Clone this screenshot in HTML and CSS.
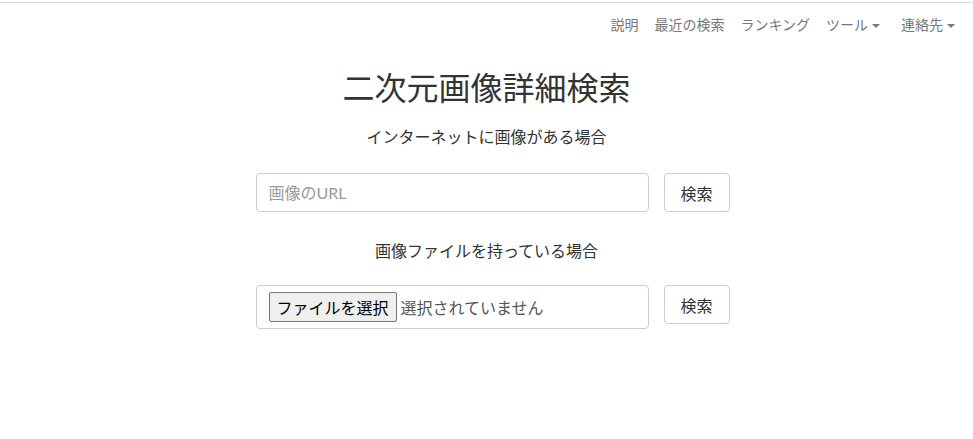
FILE: index.html
```html
<!DOCTYPE html>
<html lang="ja">
<head>
<meta charset="utf-8">
<title>二次元画像詳細検索</title>
<link rel="stylesheet" href="styles.css">
</head>
<body>
<div class="rule"></div>
<nav class="navbar">
  <ul class="nav">
    <li><a href="#">説明</a></li>
    <li><a href="#">最近の検索</a></li>
    <li><a href="#">ランキング</a></li>
    <li><a href="#" class="dropdown">ツール<span class="caret"></span></a></li>
    <li><a href="#" class="dropdown">連絡先<span class="caret"></span></a></li>
  </ul>
</nav>
<main class="main">
  <h1 class="title">二次元画像詳細検索</h1>
  <p class="lead">インターネットに画像がある場合</p>
  <form class="form-row">
    <input class="text-input" type="text" placeholder="画像のURL">
    <button class="btn" type="button">検索</button>
  </form>
  <p class="lead lead-2">画像ファイルを持っている場合</p>
  <form class="form-row form-row-2">
    <div class="file-box">
      <span class="file-btn">ファイルを選択</span>
      <span class="file-status">選択されていません</span>
    </div>
    <button class="btn" type="button">検索</button>
  </form>
</main>
</body>
</html>
```
FILE: styles.css
```css
html, body {
  margin: 0;
  padding: 0;
  background: #fff;
}
body {
  font-family: "Noto Sans CJK JP", "Lato", sans-serif;
  color: #333;
  font-size: 14px;
}
.rule {
  height: 2px;
  border-bottom: 1px solid #dddddd;
}
.navbar {
  display: flex;
  justify-content: flex-end;
  padding: 11px 5px 11px 0;
}
.nav {
  list-style: none;
  margin: 0;
  padding: 0;
  display: flex;
}
.nav a {
  display: block;
  padding: 0 8px;
  line-height: 20px;
  font-size: 14px;
  color: #777;
  text-decoration: none;
}
.caret {
  display: inline-block;
  width: 0;
  height: 0;
  margin-left: 4px;
  margin-right: 5px;
  vertical-align: middle;
  border-top: 4px solid #777;
  border-left: 4px solid transparent;
  border-right: 4px solid transparent;
}
.main {
  display: flex;
  flex-direction: column;
  align-items: center;
}
.title {
  margin: 21px 0 0;
  font-size: 32px;
  line-height: 40px;
  font-weight: 400;
  color: #333;
}
.lead {
  margin: 19px 0 0;
  font-size: 16px;
  line-height: 22px;
  color: #333;
}
.lead-2 {
  margin-top: 27px;
}
.form-row {
  margin: 26px 0 0;
  width: 490px;
  box-sizing: border-box;
  padding-left: 14px;
  display: flex;
  align-items: flex-start;
  gap: 15px;
}
.form-row-2 {
  margin-top: 24px;
}
.text-input {
  box-sizing: border-box;
  width: 393px;
  height: 39px;
  padding: 0 12px;
  border: 1px solid #ccc;
  border-radius: 4px;
  font-family: "Lato", "Noto Sans CJK JP", sans-serif;
  font-size: 16px;
  color: #555;
  outline: none;
}
.text-input::placeholder {
  color: #999;
}
.btn {
  box-sizing: border-box;
  width: 66px;
  height: 39px;
  padding: 0;
  border: 1px solid #ccc;
  border-radius: 4px;
  background: #fff;
  font-family: "Noto Sans CJK JP", sans-serif;
  font-size: 16px;
  color: #333;
}
.file-box {
  box-sizing: border-box;
  width: 393px;
  height: 44px;
  padding: 6px 12px;
  border: 1px solid #ccc;
  border-radius: 4px;
  display: flex;
  align-items: center;
  gap: 4px;
}
.file-btn {
  box-sizing: border-box;
  height: 30px;
  padding: 0 7px;
  border: 1px solid #767676;
  border-radius: 2px;
  background: #efefef;
  color: #000;
  font-size: 16px;
  line-height: 28px;
  white-space: nowrap;
}
.file-status {
  color: #555;
  font-size: 16px;
  white-space: nowrap;
}
```
